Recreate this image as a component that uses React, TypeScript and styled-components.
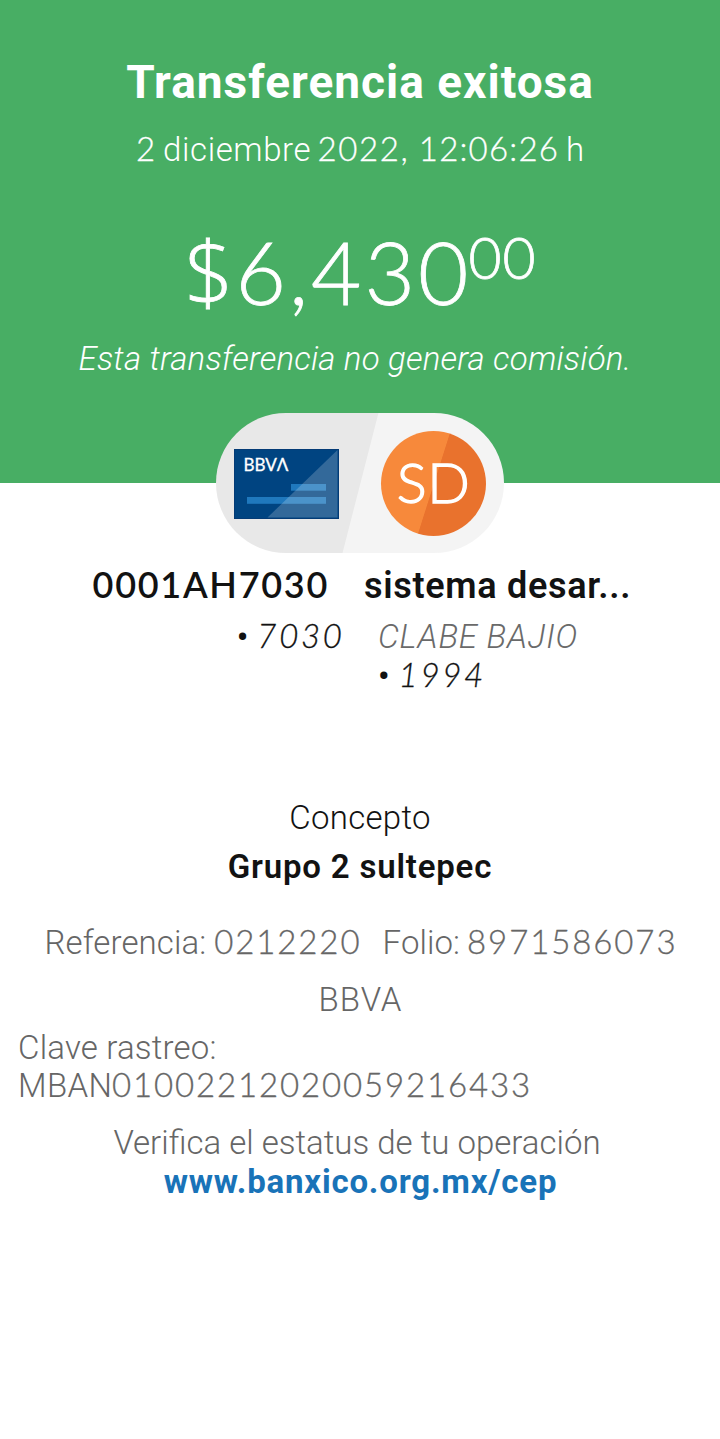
import React from "react";
import styled, { createGlobalStyle } from "styled-components";

const GlobalStyle = createGlobalStyle`
  *, *::before, *::after { box-sizing: border-box; }
  body {
    margin: 0;
    background: #ffffff;
    color: #121212;
    font-family: Roboto, "Liberation Sans", sans-serif;
    font-weight: 300;
    font-size: 33px;
    line-height: 38px;
  }
`;

const Page = styled.div`
  width: 720px;
  min-height: 1439px;
  display: flex;
  flex-direction: column;
  background: #ffffff;
`;

const Header = styled.header`
  position: relative;
  height: 483px;
  padding-top: 54px;
  display: flex;
  flex-direction: column;
  align-items: center;
  background: #48ae64;
  color: #ffffff;
  white-space: nowrap;
`;

const Title = styled.h1`
  margin: 0;
  font-size: 46px;
  line-height: 56px;
  font-weight: 700;
  letter-spacing: 1px;
`;

/* Run of characters with its own tracking; the trailing space is trimmed. */
const Run = styled.span<{ $track?: number; $before?: number }>`
  display: inline-block;
  letter-spacing: ${p => p.$track ?? 0}px;
  margin-right: ${p => -(p.$track ?? 0)}px;
  margin-left: ${p => p.$before ?? 0}px;
`;

/* Figures are set in a rounder face with wider tracking. */
const Num = styled(Run)`
  font-family: Lato, sans-serif;
  line-height: 34px;
  -webkit-text-stroke: 0.3px currentColor;
`;

const DateLine = styled.div`
  margin-top: 21px;
  height: 38px;
  display: flex;
  align-items: baseline;
`;

const Amount = styled.div`
  margin-top: 53px;
  height: 100px;
  display: flex;
  align-items: flex-start;
  font-family: Lato, sans-serif;
  font-size: 87px;
  line-height: 100px;
  -webkit-text-stroke: 0.8px currentColor;
`;

const Currency = styled.span`
  font-family: "Open Sans", sans-serif;
  font-size: 86px;
  line-height: 98px;
`;

const Cents = styled.span`
  margin: 7px -1px 0 0;
  font-size: 57px;
  line-height: 57px;
  letter-spacing: 1px;
`;

const Note = styled.p`
  margin: 18px 10px 0 0;
  font-style: italic;
  letter-spacing: 0.2px;
`;

const Pill = styled.div`
  position: absolute;
  left: 216px;
  bottom: -70px;
  width: 288px;
  height: 140px;
  padding: 0 18px;
  display: flex;
  align-items: center;
  justify-content: space-between;
  border-radius: 70px;
  background: linear-gradient(104.4deg, #e8e8e8 50%, #f4f4f4 50.3%);
`;

const CardArt = styled.svg`
  width: 105px;
  height: 70px;
  margin-top: 2px;
  display: block;
`;

const Avatar = styled.div`
  width: 105px;
  height: 105px;
  padding-bottom: 3px;
  display: flex;
  align-items: center;
  justify-content: center;
  border-radius: 50%;
  background: linear-gradient(107.6deg, #f7893b 50%, #e9722d 50.6%);
  font-family: Lato, sans-serif;
  font-weight: 300;
  font-size: 56px;
  line-height: 70px;
  letter-spacing: 0.5px;
  -webkit-text-stroke: 1.3px currentColor;
`;

const Accounts = styled.section`
  margin-top: 83px;
  height: 233px;
  display: grid;
  grid-template-columns: 342px 1fr;
  white-space: nowrap;
`;

const Account = styled.div<{ $side: "left" | "right" }>`
  display: flex;
  flex-direction: column;
  align-items: ${p => (p.$side === "left" ? "flex-end" : "flex-start")};
  padding-left: ${p => (p.$side === "left" ? 0 : 36)}px;
`;

const AccountName = styled.strong<{ $track: number; $shift: number; $figures?: boolean }>`
  height: 40px;
  font-family: ${p => (p.$figures ? "Lato" : "Roboto")}, sans-serif;
  font-size: 36px;
  line-height: ${p => (p.$figures ? 37 : 40)}px;
  font-weight: 600;
  letter-spacing: ${p => p.$track}px;
  margin: 0 ${p => p.$shift}px 12px ${p => -p.$shift}px;
`;

const AccountLine = styled.span<{ $muted?: boolean }>`
  display: flex;
  align-items: baseline;
  height: 39px;
  font-style: italic;
  color: ${p => (p.$muted ? "#6a6a6a" : "#121212")};
`;

const Dot = styled.span`
  margin-right: 9px;
  font-style: normal;
  font-weight: 500;
`;

const Details = styled.section`
  display: flex;
  flex-direction: column;
  align-items: center;
  color: #666666;
  white-space: nowrap;
`;

const Line = styled.div<{ $top?: number; $dark?: boolean; $track?: number }>`
  display: flex;
  align-items: baseline;
  height: 38px;
  margin-top: ${p => p.$top ?? 0}px;
  letter-spacing: ${p => p.$track ?? 0}px;
  color: ${p => (p.$dark ? "#121212" : "inherit")};
`;

const Concept = styled(Line)`
  font-weight: 600;
  color: #121212;
`;

const Tracking = styled.div`
  align-self: flex-start;
  margin: 10px 0 0 18px;
`;

const Hint = styled(Line)`
  margin-right: 6px;
`;

const Link = styled.a`
  margin: 1px 0 0 1px;
  color: #1973b8;
  font-weight: 700;
  letter-spacing: 0.8px;
  text-decoration: none;
`;

const BankCard = () => (
  <CardArt viewBox="0 0 105 70" aria-hidden="true">
    <rect width="105" height="70" fill="#004481" />
    <rect x="57" y="35" width="35" height="6.7" fill="#1f78bd" />
    <rect x="13" y="48" width="79" height="6.8" fill="#1f78bd" />
    <path d="M33.5 68.5 L103.5 1 V68.5 Z" fill="#ffffff" fillOpacity="0.2" />
    <rect x="0.5" y="0.5" width="104" height="69" fill="none" stroke="#043b76" />
    <text x="9.4" y="22" fontFamily="Lato, sans-serif" fontWeight="400" fontSize="16.5" fill="#ffffff" stroke="#ffffff" strokeWidth="0.3" textLength="45" lengthAdjust="spacingAndGlyphs">BBVΛ</text>
  </CardArt>
);

export default function App() {
  return (
    <Page>
      <GlobalStyle />
      <Header>
        <Title>Transferencia exitosa</Title>
        <DateLine>
          <Num>2</Num>
          <Run $track={0.6} $before={8}>diciembre</Run>
          <Num $track={1.6} $before={7}>2022,</Num>
          <Num $track={1.2} $before={11}>12:06:26</Num>
          <Run $before={8}>h</Run>
        </DateLine>
        <Amount>
          <Currency>$</Currency>
          <Run $track={3} $before={2}>6,430</Run>
          <Cents>00</Cents>
        </Amount>
        <Note>Esta transferencia no genera comisión.</Note>
        <Pill>
          <BankCard />
          <Avatar>SD</Avatar>
        </Pill>
      </Header>

      <Accounts>
        <Account $side="left">
          <AccountName $track={1.7} $shift={13} $figures>0001AH7030</AccountName>
          <AccountLine><Dot>•</Dot><Num $track={2.7}>7030</Num></AccountLine>
        </Account>
        <Account $side="right">
          <AccountName $track={0.7} $shift={14}>sistema desar...</AccountName>
          <AccountLine $muted><Run $track={0.8}>CLABE BAJIO</Run></AccountLine>
          <AccountLine><Dot>•</Dot><Num $track={2.7}>1994</Num></AccountLine>
        </Account>
      </Accounts>

      <Details>
        <Line $dark $track={0.3}>Concepto</Line>
        <Concept $top={11} $track={0.8}>Grupo 2 sultepec</Concept>
        <Line $top={38}>
          <Run $track={0.1}>Referencia:</Run>
          <Num $track={1.9} $before={8}>0212220</Num>
          <Run $track={0.1} $before={23}>Folio:</Run>
          <Num $track={1.9} $before={7}>8971586073</Num>
        </Line>
        <Line $top={19}><Run $track={1}>BBVA</Run></Line>
        <Tracking>
          <Line><Run $track={0.2}>Clave rastreo:</Run></Line>
          <Line>
            <Run $track={0.4}>MBAN</Run>
            <Num $track={1.85}>01002212020059216433</Num>
          </Line>
        </Tracking>
        <Hint $top={19}>Verifica el estatus de tu operación</Hint>
        <Link href="#">www.banxico.org.mx/cep</Link>
      </Details>
    </Page>
  );
}
